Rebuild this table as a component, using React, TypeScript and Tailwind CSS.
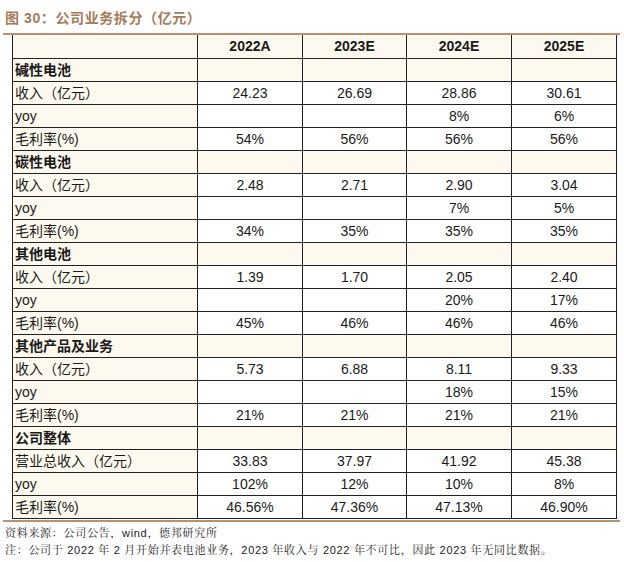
import React from 'react';

interface Row {
  label: string;
  values?: string[];
  section?: boolean;
}

const years = ['2022A', '2023E', '2024E', '2025E'];

const rows: Row[] = [
  { label: '碱性电池', section: true },
  { label: '收入（亿元）', values: ['24.23', '26.69', '28.86', '30.61'] },
  { label: 'yoy', values: ['', '', '8%', '6%'] },
  { label: '毛利率(%)', values: ['54%', '56%', '56%', '56%'] },
  { label: '碳性电池', section: true },
  { label: '收入（亿元）', values: ['2.48', '2.71', '2.90', '3.04'] },
  { label: 'yoy', values: ['', '', '7%', '5%'] },
  { label: '毛利率(%)', values: ['34%', '35%', '35%', '35%'] },
  { label: '其他电池', section: true },
  { label: '收入（亿元）', values: ['1.39', '1.70', '2.05', '2.40'] },
  { label: 'yoy', values: ['', '', '20%', '17%'] },
  { label: '毛利率(%)', values: ['45%', '46%', '46%', '46%'] },
  { label: '其他产品及业务', section: true },
  { label: '收入（亿元）', values: ['5.73', '6.88', '8.11', '9.33'] },
  { label: 'yoy', values: ['', '', '18%', '15%'] },
  { label: '毛利率(%)', values: ['21%', '21%', '21%', '21%'] },
  { label: '公司整体', section: true },
  { label: '营业总收入（亿元）', values: ['33.83', '37.97', '41.92', '45.38'] },
  { label: 'yoy', values: ['102%', '12%', '10%', '8%'] },
  { label: '毛利率(%)', values: ['46.56%', '47.36%', '47.13%', '46.90%'] },
];

const cell = 'border border-[#222] h-[23px] p-0 leading-none';

const App: React.FC = () => {
  return (
    <div className="w-[624px] h-[562px] bg-white font-['Liberation_Sans','Noto_Sans_CJK_SC',sans-serif] text-[#1a1a1a]">
      {/* Title */}
      <div className="pt-[8px] pl-[5px] h-[33px] text-[14px] font-bold text-[#a47c5a] tracking-[0.6px]">
        图 30：公司业务拆分（亿元）
      </div>
      <div className="ml-[3px] mr-[4px] h-[2px] bg-[#b89074]" />

      <div className="pl-[12px]">
        <table className="border-collapse text-[14px] table-fixed">
          <colgroup>
            <col className="w-[185px]" />
            <col className="w-[105px]" />
            <col className="w-[104px]" />
            <col className="w-[105px]" />
            <col className="w-[105px]" />
          </colgroup>
          <tbody>
            <tr className="bg-[#fdf9ee]">
              <td className={`${cell} border-t-0`} />
              {years.map(y => (
                <td key={y} className={`${cell} border-t-0 text-center font-bold`}>
                  {y}
                </td>
              ))}
            </tr>
            {rows.map((r, i) => (
              <tr key={i} className={r.section ? 'bg-[#fdf9ee]' : ''}>
                <td className={`${cell} bg-[#fdf9ee] pl-[2px] text-left ${r.section ? 'font-bold' : ''}`}>
                  {r.label}
                </td>
                {(r.values ?? ['', '', '', '']).map((v, j) => (
                  <td key={j} className={`${cell} text-center ${r.section ? '' : 'bg-white'}`}>
                    {v}
                  </td>
                ))}
              </tr>
            ))}
          </tbody>
        </table>
      </div>

      <div className="ml-[3px] mr-[4px] mt-[1px] h-[2px] bg-[#b89074]" />
      <div className="pl-[5px] pt-[3px] text-[11px] leading-[17px] text-[#222] tracking-[0.7px] font-['Liberation_Sans','Noto_Serif_CJK_SC','Noto_Sans_CJK_SC',serif]">
        <div>资料来源：公司公告，wind，德邦研究所</div>
        <div>注：公司于 2022 年 2 月开始并表电池业务，2023 年收入与 2022 年不可比，因此 2023 年无同比数据。</div>
      </div>
    </div>
  );
};

export default App;
